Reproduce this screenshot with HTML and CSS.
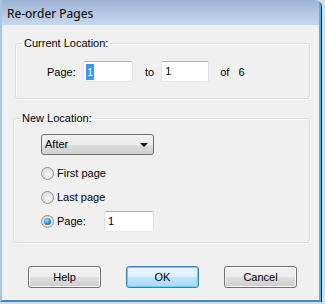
FILE: index.html
```html
<!DOCTYPE html>
<html>
<head>
    <title>Re-order Pages</title>
    <link rel="stylesheet" href="styles.css">
</head>
<body>
    <div class="window">
        <div class="titlebar">Re-order Pages</div>
        <div class="client">
            <fieldset class="group group-current">
                <legend>Current Location:</legend>
                <div class="group-body">
                    <div class="range-row">
                        <span class="range-label">Page:</span>
                        <span class="edit"><span class="selected">1</span></span>
                        <span class="range-to">to</span>
                        <span class="edit edit-to">1</span>
                        <span class="range-of">of</span>
                        <span class="range-total">6</span>
                    </div>
                </div>
            </fieldset>

            <fieldset class="group group-new">
                <legend>New Location:</legend>
                <div class="group-body">
                    <div class="combo">After<span class="combo-arrow"></span></div>
                    <div class="radio-row"><span class="radio"></span>First page</div>
                    <div class="radio-row"><span class="radio"></span>Last page</div>
                    <div class="radio-row">
                        <span class="radio checked"></span>
                        <span class="radio-label">Page:</span>
                        <span class="edit edit-page">1</span>
                    </div>
                </div>
            </fieldset>

            <div class="buttons">
                <button class="btn">Help</button>
                <button class="btn default">OK</button>
                <button class="btn">Cancel</button>
            </div>
        </div>
    </div>
</body>
</html>
```

FILE: styles.css
```css
body {
    margin: 0;
    background-color: #d9dde3;
    font-family: "Liberation Sans", Arial, sans-serif;
    font-size: 11px;
    color: #000;
}

.window {
    box-sizing: border-box;
    width: 321px;
    height: 302px;
    overflow: hidden;
    background-color: #f0f0f0;
    border-left: 2px solid #a9c6e6;
    border-right: 2px solid #4cb6e8;
    border-bottom: 2px solid #3c8cc9;
    border-top-right-radius: 6px;
    box-shadow: 1px 1px 0 #1d1d1d;
}

.titlebar {
    height: 25px;
    padding-left: 5px;
    line-height: 27px;
    font-family: "Noto Sans", sans-serif;
    font-size: 12px;
    background: linear-gradient(#9bb3d3, #c6d8ee);
}

.client {
    padding-top: 12px;
}

/* group boxes */
.group {
    margin: 0;
    padding: 0;
    border: 1px solid #d5dfe5;
    border-radius: 3px;
    box-shadow: inset 1px 1px 0 #fff, 1px 1px 0 #fff;
    box-sizing: border-box;
}

.group legend {
    margin-left: 6px;
    padding: 0 2px;
    line-height: 13px;
}

.group-current {
    margin-left: 13px;
    width: 295px;
}

.group-current .group-body {
    padding: 11px 0 16px 31px;
}

.group-new {
    margin-left: 11px;
    margin-top: 13px;
    width: 297px;
}

.group-new .group-body {
    padding: 9px 0 9px 27px;
}

.range-row {
    display: flex;
    align-items: center;
    height: 21px;
}

.range-label {
    width: 36px;
}

.edit {
    display: inline-block;
    box-sizing: border-box;
    width: 50px;
    height: 21px;
    padding: 2px 3px;
    line-height: 15px;
    background-color: #fff;
    border: 1px solid #abadb3;
    border-color: #abadb3 #dbdfe6 #e3e9ef #e2e3ea;
    border-radius: 2px;
}

.selected {
    display: inline-block;
    background-color: #3399ff;
    color: #fff;
    padding: 0 1px;
    margin-left: -1px;
    line-height: 16px;
}

.range-to {
    margin-left: 12px;
}

.edit-to {
    width: 48px;
    margin-left: 7px;
}

.range-of {
    margin-left: 11px;
}

.range-total {
    margin-left: 9px;
}

/* combo box */
.combo {
    position: relative;
    box-sizing: border-box;
    width: 113px;
    height: 21px;
    padding-left: 3px;
    line-height: 19px;
    border: 1px solid #707070;
    border-radius: 3px;
    background: linear-gradient(#f2f2f2 0%, #ebebeb 50%, #dddddd 51%, #cfcfcf 100%);
}

.combo-arrow {
    position: absolute;
    right: 5px;
    top: 8px;
    border-left: 4px solid transparent;
    border-right: 4px solid transparent;
    border-top: 4px solid #000;
}

/* radio rows */
.radio-row {
    display: flex;
    align-items: center;
    height: 24px;
}

.combo + .radio-row {
    margin-top: 6px;
}

.radio {
    position: relative;
    box-sizing: border-box;
    width: 13px;
    height: 13px;
    margin-right: 3px;
    border: 1px solid #8e8f8f;
    border-radius: 50%;
    background: radial-gradient(circle at 60% 60%, #f6f6f6, #d2d2d2);
}

.radio.checked::after {
    content: "";
    position: absolute;
    left: 2px;
    top: 2px;
    width: 7px;
    height: 7px;
    border-radius: 50%;
    background: radial-gradient(circle at 40% 35%, #a8e2ff, #2b86d6 55%, #0d3f77);
}

.radio-label {
    width: 47px;
}

.edit-page {
    width: 50px;
}

/* bottom buttons */
.buttons {
    display: flex;
    gap: 25px;
    margin-top: 23px;
    padding-left: 26px;
}

.btn {
    box-sizing: border-box;
    width: 73px;
    height: 22px;
    padding: 0;
    font-family: "Liberation Sans", Arial, sans-serif;
    font-size: 11px;
    color: #000;
    border: 1px solid #707070;
    border-radius: 3px;
    background: linear-gradient(#f2f2f2 0%, #ebebeb 50%, #dddddd 51%, #cfcfcf 100%);
    box-shadow: inset 0 0 0 1px #fcfcfc;
}

.btn.default {
    border-color: #3c7fb1;
    box-shadow: inset 0 0 0 1px #5fd3fc;
    background: linear-gradient(#eaf6fd 0%, #d9f0fc 50%, #bee6fd 51%, #a7d9f5 100%);
}
```
